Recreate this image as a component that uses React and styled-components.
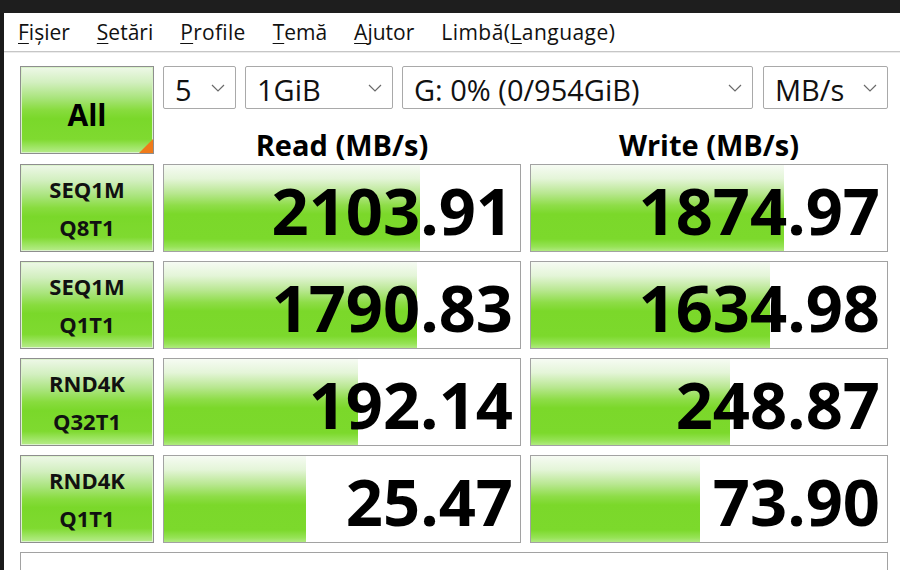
import React from "react";
import styled, { createGlobalStyle } from "styled-components";

const GlobalStyle = createGlobalStyle`
  html, body { margin: 0; padding: 0; background: #ffffff; overflow: hidden; }
  * { box-sizing: border-box; }
`;

const Frame = styled.div`
  width: 900px;
  height: 570px;
  overflow: hidden;
  background: #ffffff;
  display: flex;
  flex-direction: column;
  font-family: "Open Sans", "Noto Sans", sans-serif;
  color: #000;
`;

const TitleStrip = styled.div`
  flex: 0 0 13px;
  background: #1e1e1e;
`;

const Window = styled.div`
  flex: 1 1 auto;
  min-height: 0;
  display: flex;
  flex-direction: column;
  border-left: 4px solid #1a1a1a;
`;

const MenuBar = styled.div`
  flex: 0 0 39px;
  display: flex;
  align-items: center;
  gap: 27px;
  padding-left: 14px;
  padding-bottom: 1px;
  border-bottom: 1px solid #c6c6c6;
  box-shadow: 0 1px 0 #ececec;
  font-size: 21px;
  color: #111;
`;

const MenuItem = styled.span`
  white-space: nowrap;
  letter-spacing: ${(p) => p.$ls || 0}px;
  u { text-decoration-thickness: 1px; text-underline-offset: 3px; }
`;

const Content = styled.div`
  flex: 0 0 auto;
  padding: 14px 0 0 16px;
  display: grid;
  grid-template-columns: 134px 358px 358px;
  grid-template-rows: 89px 88px 88px 88px 88px 40px;
  column-gap: 9px;
  row-gap: 9px;
  align-items: start;
`;

const labelGradient = `linear-gradient(to bottom,
  #eef8e8 0%, #d2efbf 18%, #a9e47c 36%, #88dc3e 50%,
  #7ad82a 60%, #7fda30 84%, #a2e66a 94%, #b8ec8c 100%)`;

const barGradient = `linear-gradient(to bottom,
  #f6fbf3 0%, #e4f5d8 16%, #b8e790 33%, #8edd48 47%,
  #7bd82a 57%, #7cd92c 86%, #96e356 95%, #b0ea80 100%)`;

const AllButton = styled.div`
  position: relative;
  height: 88px;
  border: 1px solid #8e8e8e;
  box-shadow: inset 0 0 0 1px #d8f2c8;
  background: ${labelGradient};
  display: flex;
  align-items: center;
  justify-content: center;
  padding-top: 8px;
  font-weight: 700;
  font-size: 30px;
  overflow: hidden;
`;

const Corner = styled.span`
  position: absolute;
  right: 0;
  bottom: 0;
  width: 0;
  height: 0;
  border-left: 14px solid transparent;
  border-bottom: 14px solid #f07a1a;
`;

const TopPanel = styled.div`
  grid-column: 2 / 4;
  height: 89px;
  display: grid;
  grid-template-columns: 358px 358px;
  grid-template-rows: 43px 46px;
  column-gap: 9px;
`;

const ComboRow = styled.div`
  grid-column: 1 / 3;
  display: flex;
  gap: 9px;
`;

const Combo = styled.div`
  width: ${(p) => p.$w}px;
  margin-right: ${(p) => p.$mr || 0}px;
  height: 43px;
  border: 1px solid #a9a9a9;
  border-radius: 2px;
  background: #fff;
  display: flex;
  align-items: center;
  justify-content: space-between;
  padding: 4px 10px 0 11px;
  font-size: 29px;
  color: #111;
  white-space: nowrap;
  svg { margin-top: -4px; }
`;

const Header = styled.div`
  text-align: center;
  font-weight: 700;
  font-size: 29px;
  line-height: 29px;
  padding-top: 21px;
  white-space: nowrap;
`;

const LabelCell = styled.div`
  height: 88px;
  border: 1px solid #8e8e8e;
  box-shadow: inset 0 0 0 1px #dcf3cd;
  background: ${labelGradient};
  display: flex;
  flex-direction: column;
  align-items: center;
  justify-content: center;
  gap: 7px;
  font-weight: 700;
  font-size: 22px;
  line-height: 1.4;
  color: #111;
`;

const ValueCell = styled.div`
  position: relative;
  height: 88px;
  border: 1px solid #a2a2a2;
  background: #fff;
  overflow: hidden;
  display: flex;
  align-items: center;
  justify-content: flex-end;
  padding-right: 7px;
`;

const Bar = styled.div`
  position: absolute;
  left: 0;
  top: 0;
  bottom: 0;
  background: ${barGradient};
`;

const Value = styled.span`
  position: relative;
  font-weight: 700;
  font-size: 65px;
  line-height: 1;
  padding-top: 4px;
`;

const Comment = styled.div`
  grid-column: 1 / 4;
  height: 40px;
  border: 1px solid #a2a2a2;
  background: #fff;
`;

const Chevron = () => (
  <svg width="14" height="8" viewBox="0 0 14 8">
    <polyline points="1,1 7,7 13,1" fill="none" stroke="#6a6a6a" strokeWidth="1.2" />
  </svg>
);

const rows = [
  { a: "SEQ1M", b: "Q8T1", r: "2103.91", rw: 0.72, w: "1874.97", ww: 0.71 },
  { a: "SEQ1M", b: "Q1T1", r: "1790.83", rw: 0.71, w: "1634.98", ww: 0.67 },
  { a: "RND4K", b: "Q32T1", r: "192.14", rw: 0.545, w: "248.87", ww: 0.56 },
  { a: "RND4K", b: "Q1T1", r: "25.47", rw: 0.4, w: "73.90", ww: 0.475 },
];

export default function App() {
  return (
    <>
      <GlobalStyle />
      <Frame>
        <TitleStrip />
        <Window>
          <MenuBar>
            <MenuItem><u>F</u>ișier</MenuItem>
            <MenuItem><u>S</u>etări</MenuItem>
            <MenuItem $ls={0.3}><u>P</u>rofile</MenuItem>
            <MenuItem><u>T</u>emă</MenuItem>
            <MenuItem><u>A</u>jutor</MenuItem>
            <MenuItem $ls={0.45}>Limbă(<u>L</u>anguage)</MenuItem>
          </MenuBar>
          <Content>
            <AllButton>
              All
              <Corner />
            </AllButton>
            <TopPanel>
              <ComboRow>
                <Combo $w={73}>5<Chevron /></Combo>
                <Combo $w={148}>1GiB<Chevron /></Combo>
                <Combo $w={351} $mr={1}>G: 0% (0/954GiB)<Chevron /></Combo>
                <Combo $w={125}>MB/s<Chevron /></Combo>
              </ComboRow>
              <Header>Read (MB/s)</Header>
              <Header>Write (MB/s)</Header>
            </TopPanel>
            {rows.map((row, i) => (
              <React.Fragment key={i}>
                <LabelCell>
                  <span>{row.a}</span>
                  <span>{row.b}</span>
                </LabelCell>
                <ValueCell>
                  <Bar style={{ width: `${row.rw * 100}%` }} />
                  <Value>{row.r}</Value>
                </ValueCell>
                <ValueCell>
                  <Bar style={{ width: `${row.ww * 100}%` }} />
                  <Value>{row.w}</Value>
                </ValueCell>
              </React.Fragment>
            ))}
            <Comment />
          </Content>
        </Window>
      </Frame>
    </>
  );
}
